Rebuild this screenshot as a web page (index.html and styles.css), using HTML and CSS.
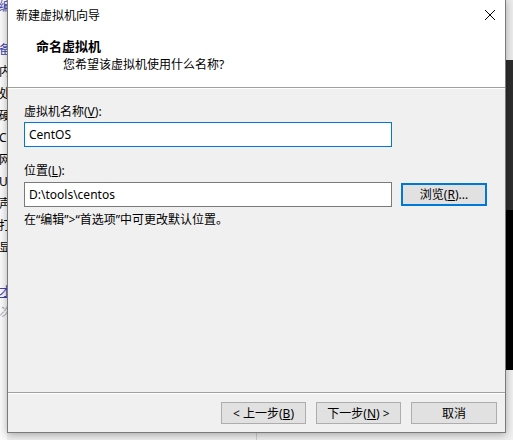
FILE: index.html
```html
<!DOCTYPE html>
<html lang="zh-CN">
<head>
  <meta charset="UTF-8" />
  <meta name="viewport" content="width=device-width, initial-scale=1" />
  <title>新建虚拟机向导</title>
  <link rel="stylesheet" href="styles.css">
</head>
<body>
  <div class="desktop">
    <!-- main app window behind the wizard -->
    <div class="backdrop">
      <div class="app-sidebar">
        <div class="side-item link first">编</div>
        <div class="side-item link gap">备</div>
        <div class="side-item">内</div>
        <div class="side-item">处</div>
        <div class="side-item">硬</div>
        <div class="side-item">C</div>
        <div class="side-item">网</div>
        <div class="side-item">U</div>
        <div class="side-item">声</div>
        <div class="side-item">打</div>
        <div class="side-item">显</div>
        <div class="side-item small link under">才</div>
        <div class="side-item small muted">次</div>
      </div>
      <div class="app-main">
        <div class="app-status"></div>
      </div>
      <div class="app-edge">
        <div class="edge-light"></div>
        <div class="edge-dark"></div>
        <div class="edge-black"></div>
        <div class="edge-rest"></div>
      </div>
    </div>

    <div class="wizard">
      <div class="wizard-head">
        <div class="titlebar">
          <span class="titlebar-text">新建虚拟机向导</span>
          <svg class="close-icon" width="10" height="10" viewBox="0 0 10 10">
            <path d="M0 0 L10 10 M10 0 L0 10" stroke="#000" stroke-width="1" fill="none" />
          </svg>
        </div>
        <div class="step-title">命名虚拟机</div>
        <div class="step-desc">您希望该虚拟机使用什么名称?</div>
      </div>

      <div class="wizard-body">
        <label class="field-label" for="vmName">虚拟机名称(<u>V</u>):</label>
        <input id="vmName" class="field-input focused" type="text" value="CentOS" />

        <label class="field-label location-label" for="vmPath">位置(<u>L</u>):</label>
        <div class="path-row">
          <input id="vmPath" class="field-input" type="text" value="D:\tools\centos" />
          <button type="button" class="btn btn-browse">浏览(<u>R</u>)...</button>
        </div>
        <div class="hint">在“编辑”&gt;“首选项”中可更改默认位置。</div>
      </div>

      <div class="wizard-foot">
        <button type="button" class="btn btn-nav">&lt; 上一步(<u>B</u>)</button>
        <button type="button" class="btn btn-nav">下一步(<u>N</u>) &gt;</button>
        <button type="button" class="btn btn-nav btn-cancel">取消</button>
      </div>
    </div>
  </div>
</body>
</html>
```

FILE: styles.css
```css
body {
  margin: 0;
  font-family: "Noto Sans", "Noto Sans CJK SC", sans-serif;
  font-size: 12px;
  color: #000;
  background: #f0f0f0;
  overflow: hidden;
}

.desktop {
  position: relative;
  width: 513px;
  height: 440px;
  overflow: hidden;
}

/* app behind */
.backdrop {
  display: flex;
  height: 100%;
}

.app-sidebar {
  width: 7px;
  overflow: hidden;
  background: #fafafa;
  display: flex;
  flex-direction: column;
}

.side-item {
  line-height: 22px;
  font-size: 12px;
  white-space: nowrap;
  margin-left: -1px;
}

.side-item.first { margin-top: -4px; }
.side-item.gap { margin-top: 21px; }
.side-item.small { line-height: 20px; }
.side-item.under { margin-top: 23px; text-decoration: underline; }
.link { color: #3b45b5; }
.muted { color: #9aa4b4; font-style: italic; }

.app-main {
  flex: 1;
  display: flex;
  flex-direction: column;
  justify-content: flex-end;
  background: #f0f0f0;
}

.app-status {
  height: 8px;
  margin-left: 249px;
  border-left: 1px solid #cfcfcf;
}

.app-edge {
  width: 7px;
  display: flex;
  flex-direction: column;
}

.edge-light { height: 60px; background: #ececec; }
.edge-dark { height: 150px; background: #2d2d2d; }
.edge-black { height: 160px; background: #000; }
.edge-rest { flex: 1; background: #f0f0f0; }

/* wizard dialog */
.wizard {
  position: absolute;
  left: 7px;
  top: -1px;
  width: 499px;
  height: 434px;
  box-sizing: border-box;
  border: 1px solid #7a7a7a;
  background: #f0f0f0;
  display: flex;
  flex-direction: column;
  box-shadow: 0 2px 8px rgba(0, 0, 0, 0.3);
}

.wizard-head {
  height: 88px;
  box-sizing: border-box;
  background: #fff;
  border-bottom: 1px solid #a0a0a0;
}

.titlebar {
  height: 30px;
  display: flex;
  align-items: center;
  justify-content: space-between;
  padding: 0 10px 0 8px;
}

.titlebar-text {
  line-height: 17px;
}

.close-icon {
  display: block;
}

.step-title {
  margin-top: 8px;
  padding-left: 28px;
  font-size: 13px;
  font-weight: 700;
  line-height: 17px;
}

.step-desc {
  margin-top: 1px;
  padding-left: 55px;
  line-height: 17px;
}

.wizard-body {
  flex: 1;
  border-top: 1px solid #fff;
  padding: 14px 0 0 16px;
}

.field-label {
  display: block;
  line-height: 17px;
  margin-bottom: 2px;
}

.location-label {
  margin-top: 15px;
  margin-bottom: 3px;
}

.field-input {
  display: block;
  width: 368px;
  height: 25px;
  box-sizing: border-box;
  margin: 0;
  padding: 0 4px;
  border: 1px solid #7a7a7a;
  background: #fff;
  font: inherit;
  color: #000;
  outline: none;
}

.field-input.focused {
  border-color: #0078d7;
}

.path-row {
  display: flex;
  align-items: center;
  gap: 9px;
}

.hint {
  margin-top: 4px;
  line-height: 17px;
}

.btn {
  margin: 0;
  padding: 0;
  background: #e1e1e1;
  border: 1px solid #adadad;
  font: inherit;
  color: #000;
  line-height: 17px;
}

.btn-browse {
  width: 86px;
  height: 23px;
  border: 2px solid #0078d7;
}

.wizard-foot {
  height: 40px;
  box-sizing: border-box;
  border-top: 1px solid #a0a0a0;
  box-shadow: inset 0 1px 0 #fff;
  padding: 9px 8px 0 0;
  display: flex;
  justify-content: flex-end;
  align-items: flex-start;
  gap: 10px;
}

.btn-nav {
  width: 85px;
  height: 22px;
}

.btn-cancel {
  width: 86px;
}
```
